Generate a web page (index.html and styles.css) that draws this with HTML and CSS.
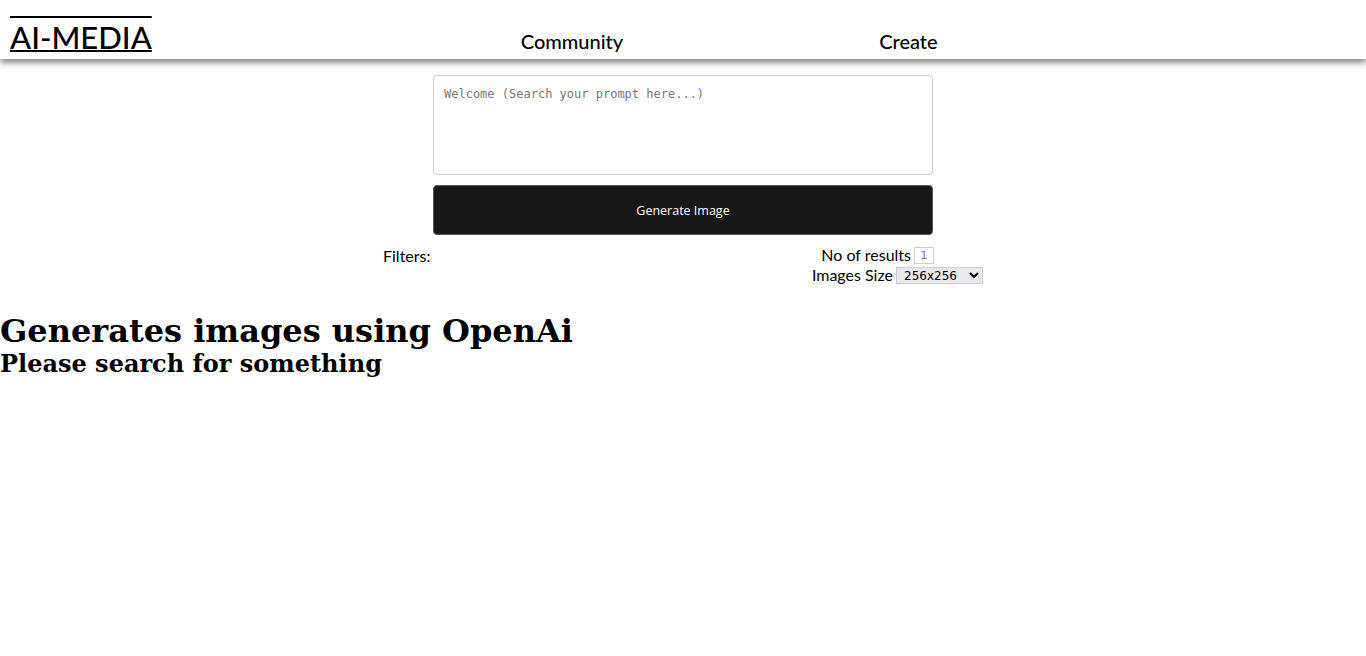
FILE: index.html
```html
<!DOCTYPE html>
<html lang="en">
<head>
<meta charset="utf-8">
<title>AI-MEDIA</title>
<link rel="stylesheet" href="styles.css">
</head>
<body>
<header class="topbar">
  <a class="logo" href="#">AI-MEDIA</a>
  <nav class="nav">
    <a class="nav-link" href="#">Community</a>
    <a class="nav-link" href="#">Create</a>
  </nav>
</header>
<main>
  <section class="prompt">
    <textarea class="prompt-input" placeholder="Welcome (Search your prompt here...)"></textarea>
    <button class="gen-btn">Generate Image</button>
  </section>
  <section class="filters">
    <span class="filters-label">Filters:</span>
    <div class="filters-opts">
      <label class="opt opt-count">No of results <input class="count" type="text" placeholder="1"></label>
      <label class="opt">Images Size <select class="size"><option>256x256</option><option>512x512</option><option>1024x1024</option></select></label>
    </div>
  </section>
  <h1 class="title">Generates images using OpenAi</h1>
  <h2 class="subtitle">Please search for something</h2>
</main>
</body>
</html>
```
FILE: styles.css
```css
html, body {
  margin: 0;
  padding: 0;
  background: #fff;
}
body {
  font-family: "DejaVu Serif", serif;
  color: #000;
}
.topbar {
  height: 59px;
  display: flex;
  align-items: flex-start;
  background: #fff;
  box-shadow: 0 4px 6px rgba(0, 0, 0, 0.45);
}
.logo {
  font-family: Lato, sans-serif;
  font-size: 31px;
  font-weight: 500;
  line-height: 36px;
  margin: 19px 0 0 10px;
  color: #000;
  text-decoration: underline overline;
  text-decoration-thickness: 2px;
}
.nav {
  display: flex;
  gap: 256px;
  margin: 28px 0 0 369px;
}
.nav-link {
  font-family: Lato, sans-serif;
  font-size: 20px;
  font-weight: 500;
  line-height: 26px;
  color: #000;
  text-decoration: none;
}
.prompt {
  width: 500px;
  margin: 16px auto 0;
  display: flex;
  flex-direction: column;
  gap: 10px;
}
.prompt-input {
  box-sizing: border-box;
  height: 100px;
  width: 100%;
  border: 1px solid #ccc;
  border-radius: 4px;
  padding: 11px 10px 10px;
  font-family: "DejaVu Sans Mono", monospace;
  font-size: 12px;
  resize: none;
}
.prompt-input::placeholder { color: #777; }
.gen-btn {
  height: 50px;
  width: 100%;
  background: #181818;
  color: #fff;
  border: 1px solid #555;
  border-radius: 4px;
  font-family: "Open Sans", sans-serif;
  font-size: 12.5px;
}
.filters {
  width: 600px;
  margin: 10px auto 0;
  display: flex;
  justify-content: space-between;
  font-family: Lato, sans-serif;
  font-size: 16px;
}
.filters-label { line-height: 22px; }
.filters-opts {
  display: flex;
  flex-direction: column;
  align-items: flex-end;
}
.opt {
  display: flex;
  align-items: center;
  gap: 3px;
  line-height: 20px;
}
.opt-count { margin-right: 49px; }
.count {
  box-sizing: border-box;
  width: 20px;
  height: 17px;
  padding: 0 2px;
  border: 1px solid #ccc;
  font-family: "DejaVu Sans", sans-serif;
  font-size: 11px;
  text-align: center;
}
.count::placeholder { color: #777; }
.size {
  width: 87px;
  height: 17px;
  font-family: "DejaVu Sans", sans-serif;
  font-size: 12px;
  border: 1px solid #ccc;
  background: #e9e9ed;
  padding: 0 3px;
}
.title {
  font-size: 32px;
  margin: 27px 0 0;
  line-height: 38px;
}
.subtitle {
  font-size: 24px;
  margin: 0;
  line-height: 28px;
}
```
